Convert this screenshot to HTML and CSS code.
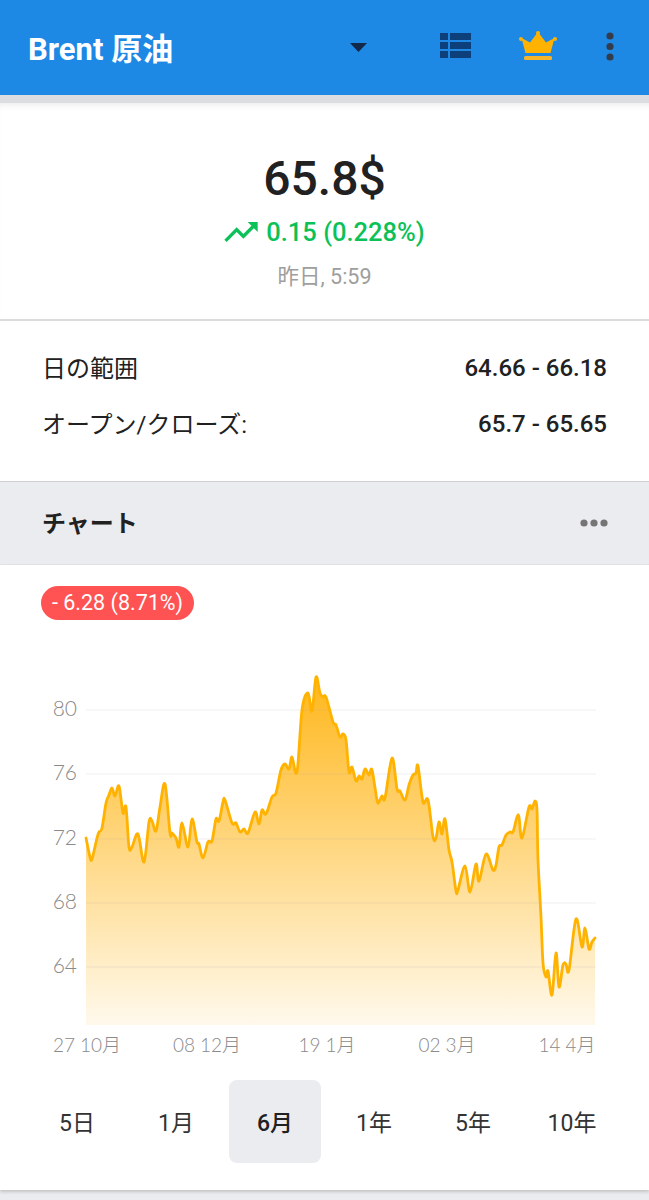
FILE: index.html
```html
<!DOCTYPE html>
<html lang="ja">
<head>
<meta charset="UTF-8">
<meta name="viewport" content="width=device-width, initial-scale=1.0">
<title>Brent 原油</title>
<link rel="stylesheet" href="styles.css">
</head>
<body>

<header class="app-bar">
    <div class="app-title">Brent 原油</div>
    <svg class="icon-caret" width="17" height="9" viewBox="0 0 17 9"><path d="M0 0h17L8.5 9z"/></svg>
    <svg class="icon-list" width="31" height="25" viewBox="0 0 31 25">
        <path d="M0 0h8v7H0zM10 0h21v7H10zM0 9h8v7H0zM10 9h21v7H10zM0 18h8v7H0zM10 18h21v7H10z"/>
    </svg>
    <svg class="icon-crown" width="38" height="29" viewBox="0 0 38 29">
        <circle cx="19" cy="2" r="2"/><circle cx="2" cy="8" r="2"/><circle cx="36" cy="8" r="2"/>
        <path d="M19 1l8 10.500 8.500-4.500L31.500 22h-25L2.500 7 11 11.500z"/>
        <rect x="5" y="25" width="28" height="4" rx="1.500" class="crown-bar"/>
    </svg>
    <svg class="icon-more" width="8" height="29" viewBox="0 0 8 29">
        <circle cx="4" cy="4" r="3.600"/><circle cx="4" cy="14.500" r="3.600"/><circle cx="4" cy="25" r="3.600"/>
    </svg>
</header>
<div class="bar-shadow"></div>

<section class="quote">
    <div class="price">65.8$</div>
    <div class="change">
        <svg width="40" height="40" viewBox="0 0 24 24"><path d="M16 6l2.290 2.290-4.880 4.880-4-4L2 16.590 3.410 18l6-6 4 4 6.300-6.290L22 12V6z"/></svg>
        <span>0.15 (0.228%)</span>
    </div>
    <div class="time">昨日, 5:59</div>
</section>

<section class="ranges">
    <div class="range-row"><span>日の範囲</span><b>64.66 - 66.18</b></div>
    <div class="range-row"><span>オープン/クローズ:</span><b>65.7 - 65.65</b></div>
</section>

<div class="chart-head">
    <span>チャート</span>
    <svg width="28" height="8" viewBox="0 0 28 8"><circle cx="4" cy="4" r="3.600"/><circle cx="14" cy="4" r="3.600"/><circle cx="24" cy="4" r="3.600"/></svg>
</div>

<section class="chart-box">
    <div class="badge">- 6.28 (8.71%)</div>

    <svg class="chart" width="649" height="375" viewBox="0 660 649 375">
        <defs>
            <linearGradient id="areaFill" gradientUnits="userSpaceOnUse" x1="0" y1="677" x2="0" y2="1025">
                <stop offset="0" stop-color="#ffb71c"/>
                <stop offset="1" stop-color="#fff9ec"/>
            </linearGradient>
        </defs>
        <path id="chartArea" fill="url(#areaFill)"/>
        <g class="grid">
            <line x1="86" x2="596" y1="710" y2="710"/>
            <line x1="86" x2="596" y1="774" y2="774"/>
            <line x1="86" x2="596" y1="839" y2="839"/>
            <line x1="86" x2="596" y1="903" y2="903"/>
            <line x1="86" x2="596" y1="967" y2="967"/>
        </g>
        <path id="chartLine" class="line"/>
        <g class="y-labels">
            <text x="77" y="716">80</text>
            <text x="77" y="780">76</text>
            <text x="77" y="845">72</text>
            <text x="77" y="909">68</text>
            <text x="77" y="973">64</text>
        </g>
    </svg>

    <div class="x-labels">
        <span>27 10月</span>
        <span>08 12月</span>
        <span>19 1月</span>
        <span>02 3月</span>
        <span>14 4月</span>
    </div>

    <div class="tabs">
        <div class="tab">5日</div>
        <div class="tab">1月</div>
        <div class="tab active">6月</div>
        <div class="tab">1年</div>
        <div class="tab">5年</div>
        <div class="tab">10年</div>
    </div>
</section>

<script src="chart.js"></script>
</body>
</html>
```

FILE: styles.css
```css
html, body {
    margin: 0;
    padding: 0;
}
body {
    width: 649px;
    height: 1200px;
    overflow: hidden;
    background-color: #ebecf0;
    color: #212121;
    font-family: Roboto, "Noto Sans CJK JP", sans-serif;
}

/* top bar */
.app-bar {
    height: 95px;
    display: flex;
    align-items: center;
    background-color: #1e88e5;
    padding-left: 28px;
    box-sizing: border-box;
}
.app-title {
    flex: 1;
    color: white;
    font-size: 31px;
    font-weight: 700;
    margin-top: -3px;
}
.icon-caret {
    fill: #12294a;
    margin-right: 73px;
    margin-top: -1px;
}
.icon-list {
    fill: #0d3f7a;
    margin-right: 48px;
    margin-top: -5px;
}
.icon-crown {
    fill: #ffb300;
    margin-right: 49px;
    margin-top: -5px;
}
.crown-bar {
    fill: #f5b52b;
}
.icon-more {
    fill: #333c4c;
    margin-right: 35px;
    margin-top: -3px;
}
.bar-shadow {
    height: 8px;
    background-color: #dcdde1;
}

/* price block */
.quote {
    height: 218px;
    box-sizing: border-box;
    background-color: white;
    border-bottom: 2px solid #dcdcdc;
    box-shadow: inset 0 7px 7px -5px #ececec;
    display: flex;
    flex-direction: column;
    align-items: center;
    padding-top: 46px;
}
.price {
    font-size: 48px;
    font-weight: 500;
    line-height: 60px;
}
.change {
    display: flex;
    align-items: center;
    color: #0cc157;
    font-size: 25.500px;
    font-weight: 500;
    height: 40px;
    margin-top: 3px;
}
.change svg {
    fill: #0cc157;
    margin-right: 5px;
    margin-left: -3px;
}
.time {
    color: #9e9e9e;
    font-size: 21.500px;
    line-height: 28px;
    margin-top: 11px;
}

.ranges {
    height: 161px;
    box-sizing: border-box;
    background-color: white;
    border-bottom: 1px solid #cfcfcf;
    padding: 19px 42px 0 42px;
}
.range-row {
    display: flex;
    justify-content: space-between;
    align-items: center;
    height: 56px;
    font-size: 24px;
}
.range-row span {
    margin-bottom: 4px;
}
.range-row b {
    font-weight: 500;
}

/* chart */
.chart-head {
    height: 83px;
    box-sizing: border-box;
    display: flex;
    justify-content: space-between;
    align-items: center;
    padding: 0 41px 0 42px;
    border-bottom: 1px solid #e2e3e6;
    font-size: 24px;
    font-weight: 700;
}
.chart-head span {
    margin-bottom: 3px;
}
.chart-head svg {
    fill: #757575;
}
.chart-box {
    height: 625px;
    box-sizing: border-box;
    background-color: white;
    padding-top: 21px;
    box-shadow: 0 2px 3px #c4c4c4;
}
.badge {
    display: inline-block;
    margin-left: 41px;
    height: 34px;
    line-height: 34px;
    padding: 0 11px;
    border-radius: 17px;
    background-color: #ff5252;
    color: white;
    font-size: 21.500px;
}
.chart {
    display: block;
    margin-top: 40px;
}
.grid line {
    stroke: #9e9e9e;
    stroke-opacity: 0.17;
    stroke-width: 1;
}
.line {
    fill: none;
    stroke: #ffb300;
    stroke-width: 2.800;
    stroke-linejoin: round;
    stroke-linecap: round;
}
.y-labels text {
    fill: #8a8a8a;
    font-family: Lato, "Noto Sans CJK JP", sans-serif;
    font-size: 21px;
    font-weight: 300;
    text-anchor: end;
}
.x-labels {
    display: grid;
    grid-template-columns: repeat(5, 120px);
    padding-left: 27px;
    height: 18px;
    line-height: 20px;
    margin-bottom: 27px;
    color: #8a8a8a;
    font-family: Lato, "Noto Sans CJK JP", sans-serif;
    font-size: 19px;
    font-weight: 300;
    text-align: center;
}
.tabs {
    display: grid;
    grid-template-columns: repeat(6, 92px);
    gap: 7px;
    padding-left: 31px;
}
.tab {
    height: 83px;
    line-height: 87px;
    text-align: center;
    font-size: 23px;
    color: #333;
    border-radius: 8px;
}
.tab.active {
    background-color: #ebecf0;
    color: #212121;
    font-weight: 500;
}
```

FILE: chart.js
```js
// Price points, traced in screen pixels of the chart
var points = [
    [86,838],[90,857],[92,859],[97,838],[99,832],[102,828],[106,803],[109,795],[112,788],[115,796],
    [119,786],[123,813],[126,807],[129,847],[132,847],[138,834],[144,862],[149,822],[152,821],[156,831],
    [160,807],[165,784],[170,833],[172,833],[176,838],[179,847],[182,823],[188,847],[192,819],[197,842],
    [199,844],[203,858],[208,842],[212,841],[216,819],[219,821],[223,802],[225,800],[232,823],[236,823],
    [240,832],[244,829],[248,833],[255,812],[259,824],[262,810],[266,814],[272,797],[276,793],[281,770],
    [285,764],[289,769],[292,757],[297,772],[302,710],[308,693],[312,711],[316,677],[320,693],[323,697],
    [326,697],[333,722],[336,725],[340,737],[343,734],[346,740],[349,772],[352,767],[356,781],[359,776],
    [362,779],[365,769],[369,775],[372,770],[377,800],[379,802],[382,796],[385,798],[392,758],[397,789],
    [400,791],[405,800],[409,785],[413,775],[416,773],[418,766],[423,802],[428,800],[433,837],[436,838],
    [439,822],[442,834],[445,819],[449,850],[452,862],[456,891],[458,890],[465,866],[470,892],[476,864],
    [479,881],[486,854],[493,870],[496,865],[499,847],[502,845],[506,835],[510,832],[513,832],[517,817],
    [519,817],[522,838],[529,807],[532,809],[535,801],[537,810],[538,860],[541,917],[543,963],[546,977],
    [548,971],[552,995],[556,953],[559,987],[563,965],[566,964],[569,970],[576,919],[582,947],[585,928],
    [589,949],[592,942],[595,938]
];

// Smooth the line with a catmull-rom curve
function smoothPath(pts) {
    var d = 'M' + pts[0][0] + ' ' + pts[0][1];
    for (var i = 0; i < pts.length - 1; i++) {
        var p0 = pts[i - 1] || pts[i];
        var p1 = pts[i];
        var p2 = pts[i + 1];
        var p3 = pts[i + 2] || p2;
        var c1x = p1[0] + (p2[0] - p0[0]) / 6;
        var c1y = p1[1] + (p2[1] - p0[1]) / 6;
        var c2x = p2[0] - (p3[0] - p1[0]) / 6;
        var c2y = p2[1] - (p3[1] - p1[1]) / 6;
        d += 'C' + c1x.toFixed(1) + ' ' + c1y.toFixed(1) + ' ' + c2x.toFixed(1) + ' ' + c2y.toFixed(1) + ' ' + p2[0] + ' ' + p2[1];
    }
    return d;
}

var linePath = smoothPath(points);
document.getElementById('chartLine').setAttribute('d', linePath);
document.getElementById('chartArea').setAttribute('d', linePath + 'L595 1025L86 1025Z');
```
